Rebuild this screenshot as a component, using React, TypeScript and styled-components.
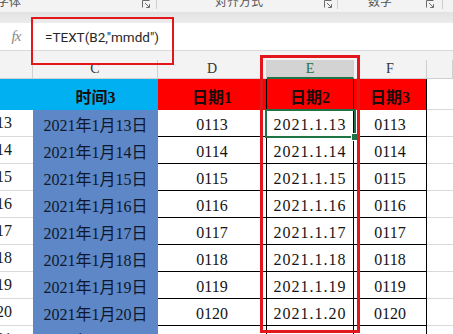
import styled, { createGlobalStyle } from 'styled-components';

const GlobalStyle = createGlobalStyle`
  html, body {
    margin: 0;
    padding: 0;
    background: #fff;
  }
  body {
    font-family: "Liberation Serif", "Noto Sans CJK SC", serif;
  }
`;

const COLUMNS = '33px 125px 109px 87px 73px 1fr';

const Page = styled.div`
  position: relative;
  width: 453px;
  height: 334px;
  overflow: hidden;
  background: #fff;
`;

const Ribbon = styled.div`
  display: flex;
  align-items: flex-start;
  height: 12px;
  background: #f3f3f3;
  overflow: hidden;
`;

const RibbonGroup = styled.div<{ $width: number }>`
  flex: 0 0 ${p => p.$width}px;
  display: flex;
  align-items: flex-start;
  height: 9px;
  box-sizing: border-box;
  border-right: 1px solid #cfcfcf;
`;

const RibbonLabel = styled.span<{ $offset: number }>`
  margin-left: ${p => p.$offset}px;
  margin-top: -5px;
  font-family: "Noto Sans CJK SC", sans-serif;
  font-size: 12px;
  line-height: 12px;
  color: #555;
  white-space: nowrap;
`;

const Launcher = styled.svg<{ $gap: number }>`
  margin-left: auto;
  margin-right: ${p => p.$gap}px;
  flex: 0 0 auto;
`;

const RibbonShadow = styled.div`
  height: 11px;
  background: linear-gradient(#e2e2e2, #ececec);
`;

const FormulaBar = styled.div`
  display: flex;
  height: 27px;
  background: #fff;
  border-bottom: 1px solid #dadada;
`;

const FxBox = styled.div`
  flex: 0 0 33px;
  display: flex;
  align-items: center;
  justify-content: center;
  box-sizing: border-box;
  border-right: 1px solid #dadada;
  font-family: "Liberation Serif", serif;
  font-style: italic;
  font-size: 15px;
  color: #8a8a8a;
  letter-spacing: -1px;
`;

const FormulaText = styled.div`
  display: flex;
  align-items: center;
  padding-left: 12px;
  font-family: Roboto, "Liberation Sans", sans-serif;
  font-size: 13.5px;
  color: #262626;
`;

const HeaderGap = styled.div`
  height: 9px;
  background: #f3f3f3;
`;

const ColumnHeaders = styled.div`
  display: grid;
  grid-template-columns: ${COLUMNS};
  height: 19px;
  background: #f3f3f3;
`;

const ColumnHeader = styled.div<{ $selected?: boolean }>`
  display: flex;
  align-items: center;
  justify-content: center;
  box-sizing: border-box;
  border-right: 1px solid #d0d0d0;
  border-bottom: ${p => (p.$selected ? '2px solid #217346' : '1px solid #d0d0d0')};
  background: ${p => (p.$selected ? '#d3d3d3' : 'transparent')};
  color: ${p => (p.$selected ? '#217346' : '#333')};
  font-family: "Liberation Serif", serif;
  font-size: 14px;
`;

const SheetRow = styled.div<{ $height: number }>`
  display: grid;
  grid-template-columns: ${COLUMNS};
  height: ${p => p.$height}px;
`;

const HeadCell = styled.div<{ $bg: string; $edge?: boolean }>`
  display: flex;
  align-items: center;
  justify-content: center;
  padding-top: 3px;
  box-sizing: border-box;
  background: ${p => p.$bg};
  border-right: ${p => (p.$edge ? '1px solid #000' : 'none')};
  font-family: "Liberation Serif", "Noto Sans CJK SC", serif;
  font-weight: 700;
  font-size: 16px;
  color: #1a0c0c;
`;

const BlankCell = styled.div`
  box-sizing: border-box;
  border-bottom: 1px solid #dadada;
  background: #fff;
`;

const SideCell = styled.div`
  display: flex;
  align-items: center;
  justify-content: flex-end;
  padding-right: 21px;
  box-sizing: border-box;
  overflow: hidden;
  white-space: nowrap;
  border-bottom: 1px solid #dadada;
  font-size: 16px;
  color: #1a1a1a;
`;

const DateCell = styled.div`
  display: flex;
  align-items: center;
  justify-content: center;
  background: #5d87c6;
  white-space: nowrap;
  font-size: 16px;
  color: #0d1830;
`;

const ValueCell = styled.div<{ $spaced?: boolean }>`
  position: relative;
  display: flex;
  align-items: flex-end;
  justify-content: center;
  padding-bottom: 2px;
  box-sizing: border-box;
  border-right: 1px solid #000;
  border-bottom: 1px solid #000;
  background: #fff;
  font-size: 16px;
  letter-spacing: ${p => (p.$spaced ? '1px' : '0')};
  color: #141414;
`;

const Selection = styled.div`
  position: absolute;
  z-index: 2;
  left: -2px;
  top: -1px;
  width: 91px;
  height: 29px;
  box-sizing: border-box;
  border: 2px solid #217346;
`;

const FillHandle = styled.div`
  position: absolute;
  right: -5px;
  bottom: -5px;
  width: 6px;
  height: 6px;
  background: #217346;
  border: 1px solid #fff;
`;

const Highlight = styled.div<{ $left: number; $top: number; $width: number; $height: number; $stroke: number }>`
  position: absolute;
  z-index: 3;
  left: ${p => p.$left}px;
  top: ${p => p.$top}px;
  width: ${p => p.$width}px;
  height: ${p => p.$height}px;
  box-sizing: border-box;
  border: ${p => p.$stroke}px solid #e3161b;
  pointer-events: none;
`;

const groups = [
  { width: 157, label: '字体', offset: -3, gap: 6 },
  { width: 181, label: '对齐方式', offset: 58, gap: 5 },
  { width: 105, label: '数字', offset: 30, gap: 8 },
];

const days = [13, 14, 15, 16, 17, 18, 19, 20, 21];

function LauncherIcon({ gap }: { gap: number }) {
  return (
    <Launcher $gap={gap} width="8" height="8" viewBox="0 0 8 8" fill="none" stroke="#6b6b6b" strokeWidth="1">
      <path d="M0.5 7.5V0.5H7.5" />
      <path d="M3 3l4 4M7.5 4.2v3.3H4.2" />
    </Launcher>
  );
}

export default function App() {
  return (
    <Page>
      <GlobalStyle />
      <Ribbon>
        {groups.map(g => (
          <RibbonGroup key={g.label} $width={g.width}>
            <RibbonLabel $offset={g.offset}>{g.label}</RibbonLabel>
            <LauncherIcon gap={g.gap} />
          </RibbonGroup>
        ))}
      </Ribbon>
      <RibbonShadow />
      <FormulaBar>
        <FxBox>fx</FxBox>
        <FormulaText>=TEXT(B2,"mmdd")</FormulaText>
      </FormulaBar>
      <HeaderGap />
      <ColumnHeaders>
        <ColumnHeader />
        <ColumnHeader>C</ColumnHeader>
        <ColumnHeader>D</ColumnHeader>
        <ColumnHeader $selected>E</ColumnHeader>
        <ColumnHeader>F</ColumnHeader>
        <ColumnHeader />
      </ColumnHeaders>
      <SheetRow $height={31}>
        <HeadCell $bg="#00b0f0" />
        <HeadCell $bg="#00b0f0">时间3</HeadCell>
        <HeadCell $bg="#ff0000" $edge>日期1</HeadCell>
        <HeadCell $bg="#ff0000" $edge>日期2</HeadCell>
        <HeadCell $bg="#ff0000" $edge>日期3</HeadCell>
        <BlankCell />
      </SheetRow>
      {days.map((d, i) => (
        <SheetRow key={d} $height={27}>
          <SideCell>2021.1.{d}</SideCell>
          <DateCell>2021年1月{d}日</DateCell>
          <ValueCell>01{d}</ValueCell>
          <ValueCell $spaced>
            2021.1.{d}
            {i === 0 && (
              <Selection>
                <FillHandle />
              </Selection>
            )}
          </ValueCell>
          <ValueCell>01{d}</ValueCell>
          <BlankCell />
        </SheetRow>
      ))}
      <Highlight $left={31} $top={17} $width={143} $height={48} $stroke={2} />
      <Highlight $left={260} $top={55} $width={100} $height={278} $stroke={3} />
    </Page>
  );
}
